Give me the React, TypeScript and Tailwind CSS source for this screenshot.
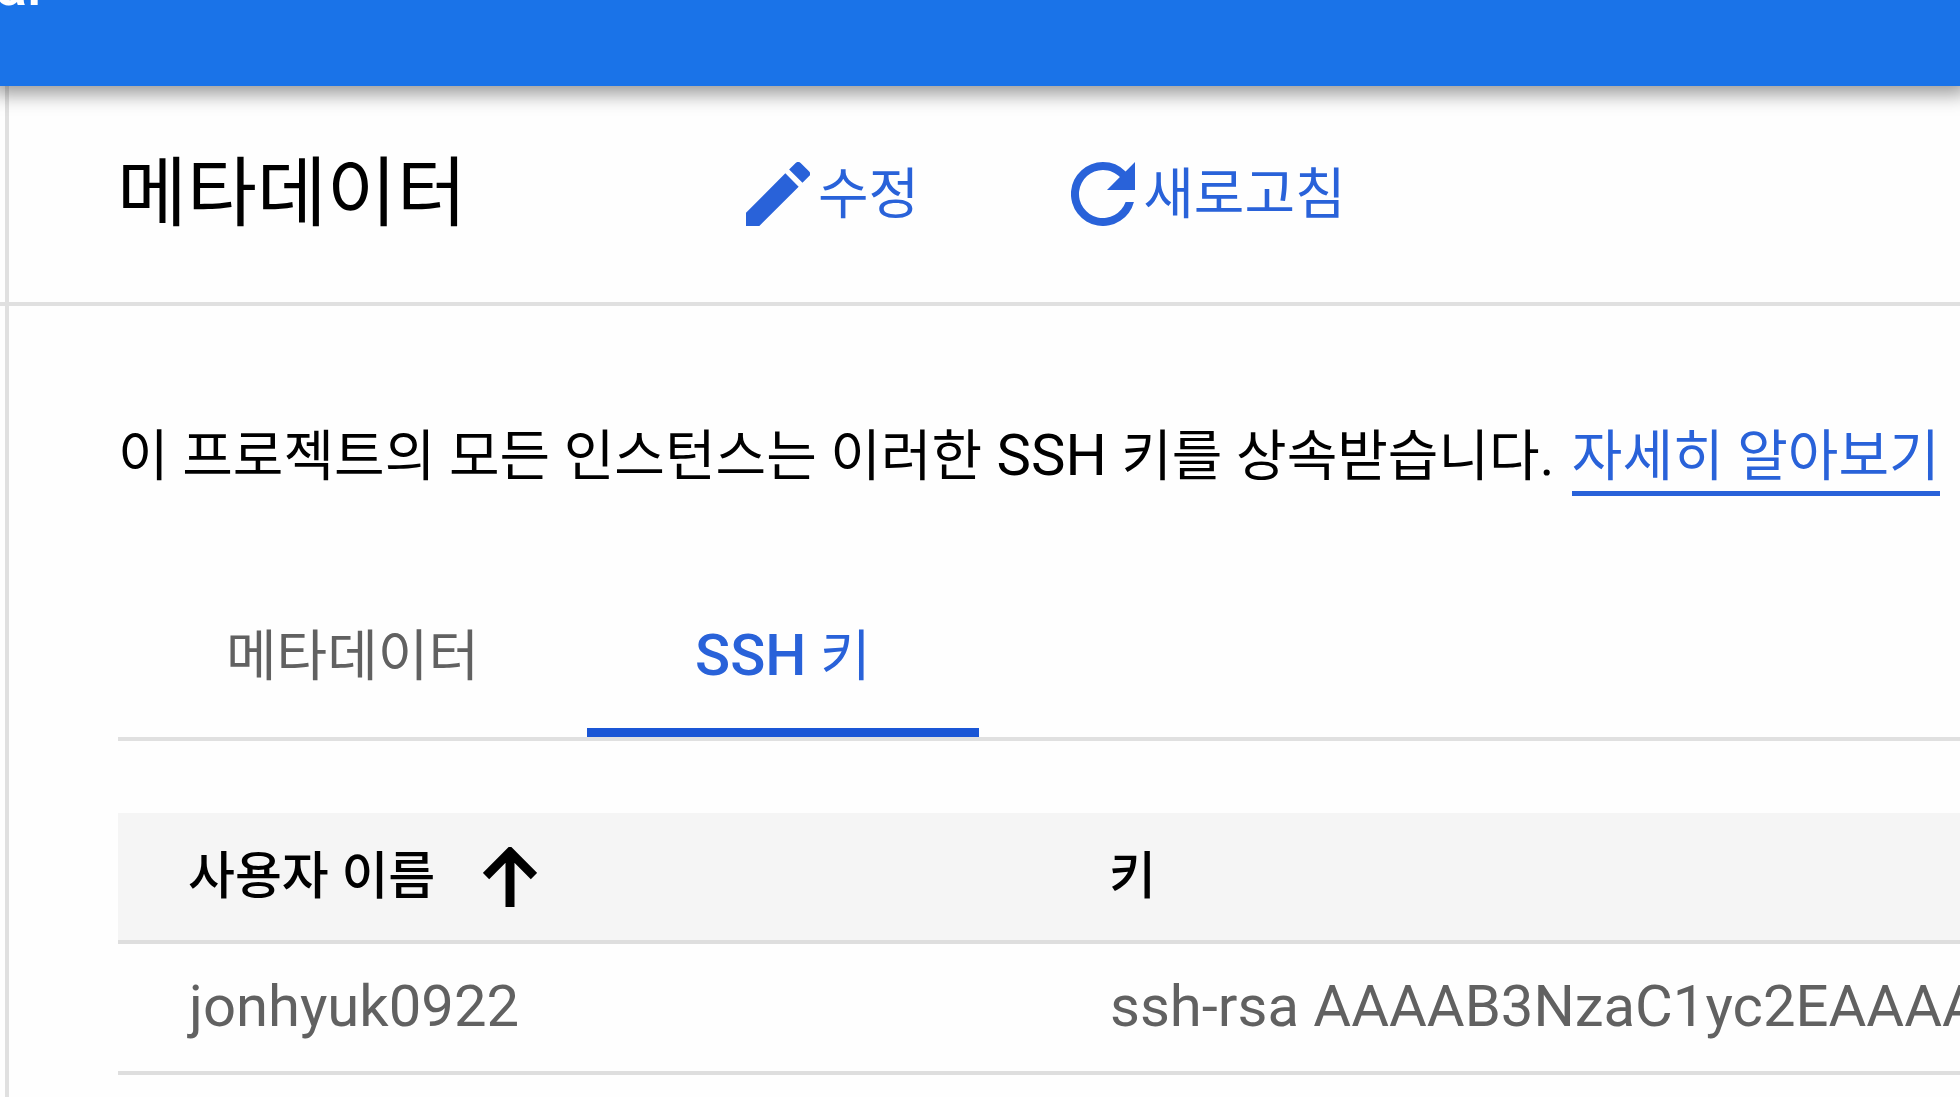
import { useState } from 'react'

type SshKey = {
  user: string
  key: string
}

const SSH_KEYS: SshKey[] = [
  { user: 'jonhyuk0922', key: 'ssh-rsa AAAAB3NzaC1yc2EAAAADAQABAAABAQ' },
]

const TABS = [
  { id: 'metadata', label: <>메타데이터</> },
  { id: 'ssh', label: <><span className="text-[58px] font-medium">SSH</span> 키</> },
]

function EditIcon() {
  return (
    <svg viewBox="3 3 18 18" className="size-16 shrink-0" fill="currentColor" aria-hidden="true">
      <path d="M3 17.25V21h3.75L17.81 9.94l-3.75-3.75L3 17.25zM20.71 7.04a1 1 0 0 0 0-1.41l-2.34-2.34a1 1 0 0 0-1.41 0l-1.83 1.83 3.75 3.75 1.83-1.83z" />
    </svg>
  )
}

function RefreshIcon() {
  return (
    <svg viewBox="4 4 16 16" className="size-16 shrink-0" fill="currentColor" aria-hidden="true">
      <path d="M17.65 6.35A7.96 7.96 0 0 0 12 4a8 8 0 1 0 7.73 10h-2.08A6 6 0 1 1 12 6c1.66 0 3.14.69 4.22 1.78L13 11h7V4l-2.35 2.35z" />
    </svg>
  )
}

function SortArrow() {
  return (
    <svg viewBox="0 0 54 60" className="h-15 w-[54px] shrink-0" fill="none" stroke="currentColor" aria-hidden="true">
      <path d="M3 29 27 5l24 24M27 5v55" strokeWidth="9" />
    </svg>
  )
}

export default function App() {
  const [tab, setTab] = useState('ssh')

  return (
    <div className="flex min-h-screen flex-col overflow-hidden bg-[#fefefe] font-[Roboto,'Noto_Sans_CJK_KR',sans-serif] text-[55px] leading-[80px] text-black">
      {/* Top bar, scrolled almost out of view */}
      <div className="relative z-10 h-[86px] bg-[#1a73e8] shadow-[0_0_18px_8px_rgba(0,0,0,0.4)]">
        <div className="flex h-0 items-end text-white">
          <span className="-ml-1 text-[58px] leading-[30px] font-medium">ar</span>
        </div>
      </div>

      <div className="flex grow">
        {/* Edge of the side navigation */}
        <div className="w-[9px] shrink-0 border-r-4 border-[#e0e0e0]">
          <div className="h-[220px] border-b-4 border-[#e0e0e0]" />
        </div>

        <main className="min-w-0 grow">
          <header className="flex h-[220px] items-center border-b-4 border-[#e0e0e0] pl-[108px] text-[#2962d9]">
            <h1 className="w-[629px] text-[76px] text-black">메타데이터</h1>
            <button className="mr-[152px] flex items-center gap-2">
              <EditIcon />
              수정
            </button>
            <button className="flex items-center gap-2">
              <RefreshIcon />
              새로고침
            </button>
          </header>

          <section className="pl-[109px]">
            <p className="pt-[109px] whitespace-nowrap">
              이 프로젝트의 모든 인스턴스는 이러한<span className="text-[58px]"> SSH </span>키를 상속받습니다.{' '}
              <a href="#learn-more" className="ml-1 inline-block border-b-[5px] border-[#2962d9] leading-[70px] text-[#2962d9]">
                자세히 알아보기
              </a>
            </p>

            <div role="tablist" className="mt-[93px] flex border-b-4 border-[#e0e0e0]">
              {TABS.map(t => (
                <button
                  key={t.id}
                  role="tab"
                  aria-selected={tab === t.id}
                  onClick={() => setTab(t.id)}
                  className={
                    tab === t.id
                      ? 'border-b-[9px] border-[#1a56d6] px-[108px] pt-[26px] pb-8 text-[#2962d9]'
                      : 'border-b-[9px] border-transparent px-[108px] pt-[26px] pb-8 text-[#616161]'
                  }
                >
                  {t.label}
                </button>
              ))}
            </div>

            <table className="mt-[72px] w-full table-fixed text-left">
              <thead className="text-[51px]">
                <tr className="h-[129px] border-b-4 border-[#dedede] bg-[#f5f5f5]">
                  <th className="w-1/2 pl-[70px] font-medium">
                    <span className="flex items-center gap-12">
                      사용자 이름
                      <SortArrow />
                    </span>
                  </th>
                  <th className="pl-[70px] font-medium">키</th>
                </tr>
              </thead>
              <tbody className="text-[58px] text-[#616161]">
                {SSH_KEYS.map(row => (
                  <tr key={row.user} className="h-[131px] border-b-4 border-[#dedede]">
                    <td className="pb-1 pl-[71px]">{row.user}</td>
                    <td className="overflow-hidden pb-1 pl-[71px] whitespace-nowrap">{row.key}</td>
                  </tr>
                ))}
              </tbody>
            </table>
          </section>
        </main>
      </div>
    </div>
  )
}
